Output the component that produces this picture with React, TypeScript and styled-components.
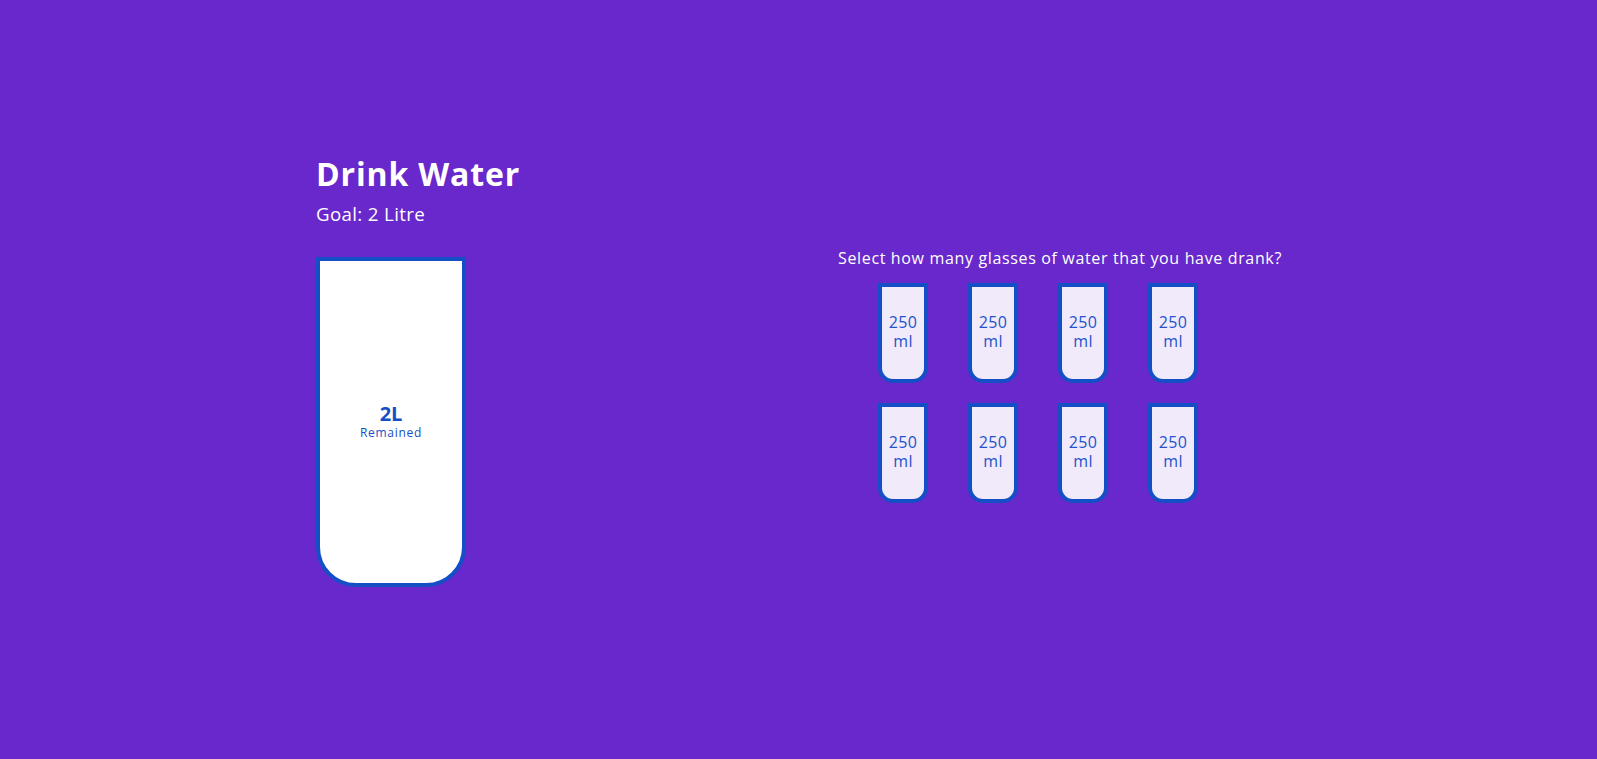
import React from "react";
import styled, { createGlobalStyle } from "styled-components";

const GlobalStyle = createGlobalStyle`
  * { box-sizing: border-box; }
  html, body { margin: 0; padding: 0; }
  body {
    background-color: #6928cb;
    color: #ffffff;
    font-family: "Open Sans", "Noto Sans", sans-serif;
    min-height: 759px;
  }
`;

const Page = styled.main`
  width: 965px;
  margin: 0 auto;
  padding-top: 154px;
  display: flex;
  justify-content: space-between;
  align-items: flex-start;
`;

const LeftColumn = styled.section`
  display: flex;
  flex-direction: column;
  align-items: flex-start;
`;

const Title = styled.h1`
  margin: 0;
  font-size: 32px;
  line-height: 40px;
  font-weight: 700;
  letter-spacing: 0.85px;
`;

const Goal = styled.h3`
  margin: 8px 0 0;
  font-size: 18.7px;
  line-height: 24px;
  font-weight: 400;
  letter-spacing: 0.35px;
`;

const BigCup = styled.div`
  margin-top: 31px;
  width: 150px;
  height: 330px;
  background-color: #ffffff;
  border: 4px solid #144fc6;
  border-radius: 0 0 40px 40px;
  color: #144fc6;
  display: flex;
  flex-direction: column;
  overflow: hidden;
`;

const Remained = styled.div`
  flex: 1;
  display: flex;
  flex-direction: column;
  align-items: center;
  justify-content: center;
  text-align: center;
`;

const Amount = styled.span`
  font-size: 20px;
  line-height: 22px;
  font-weight: 700;
`;

const AmountLabel = styled.small`
  font-size: 12px;
  line-height: 16px;
  letter-spacing: 0.7px;
`;

const RightColumn = styled.section`
  width: 443px;
  margin-top: 93px;
`;

const Prompt = styled.p`
  margin: 0;
  font-size: 16px;
  line-height: 22px;
  letter-spacing: 0.65px;
  white-space: nowrap;
`;

const Cups = styled.div`
  margin-top: 14px;
  padding-left: 40px;
  display: grid;
  grid-template-columns: repeat(4, 50px);
  column-gap: 40px;
  row-gap: 20px;
`;

const SmallCup = styled.div`
  width: 50px;
  height: 100px;
  padding-bottom: 2px;
  background-color: rgba(255, 255, 255, 0.9);
  border: 4px solid #144fc6;
  border-radius: 0 0 15px 15px;
  color: #2552cc;
  font-size: 16px;
  line-height: 19px;
  letter-spacing: 0.3px;
  display: flex;
  align-items: center;
  justify-content: center;
  text-align: center;
  cursor: pointer;
`;

const cups = Array.from({ length: 8 }, (_, i) => i);

export default function App() {
  return (
    <>
      <GlobalStyle />
      <Page>
        <LeftColumn>
          <Title>Drink Water</Title>
          <Goal>Goal: 2 Litre</Goal>
          <BigCup>
            <Remained>
              <Amount>2L</Amount>
              <AmountLabel>Remained</AmountLabel>
            </Remained>
          </BigCup>
        </LeftColumn>
        <RightColumn>
          <Prompt>Select how many glasses of water that you have drank?</Prompt>
          <Cups>
            {cups.map((i) => (
              <SmallCup key={i}>250 ml</SmallCup>
            ))}
          </Cups>
        </RightColumn>
      </Page>
    </>
  );
}
